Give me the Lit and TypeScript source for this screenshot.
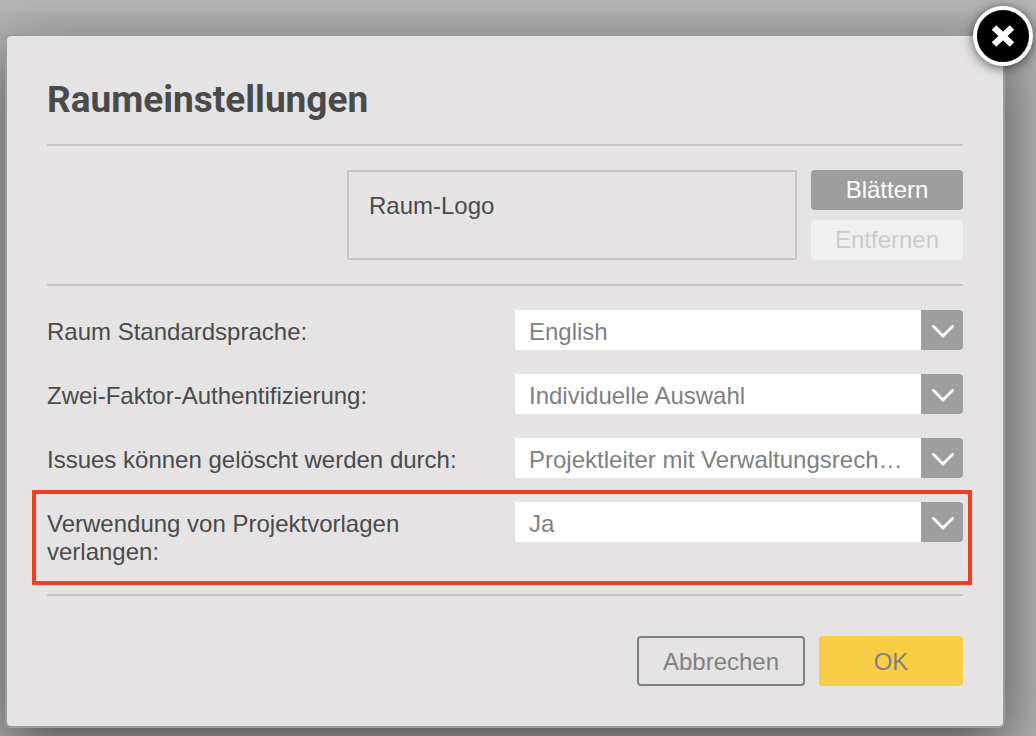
import { LitElement, html, css } from "lit";
import { customElement, property } from "lit/decorators.js";

@customElement("select-row")
class SelectRow extends LitElement {
  @property() name = "";
  @property() label = "";
  @property({ attribute: false }) options: string[] = [];

  static styles = css`
    :host {
      display: block;
    }
    .row {
      display: grid;
      grid-template-columns: minmax(0, 1fr) 448px;
      column-gap: 20px;
      align-items: start;
    }
    .label {
      padding-top: 8px;
    }
    .field {
      display: grid;
      grid-template-columns: minmax(0, 1fr) 42px;
      height: 40px;
    }
    .select {
      grid-area: 1 / 1 / 2 / 3;
      appearance: none;
      box-sizing: border-box;
      width: 100%;
      height: 40px;
      margin: 0;
      padding: 4px 56px 0 14px;
      border: 0;
      border-radius: 0 4px 4px 0;
      background: #fff;
      color: #808080;
      font: inherit;
      text-overflow: ellipsis;
      white-space: nowrap;
      overflow: hidden;
    }
    .arrow {
      grid-area: 1 / 2 / 2 / 3;
      z-index: 1;
      width: 42px;
      height: 40px;
      border-radius: 0 4px 4px 0;
      background: #9e9e9e;
      pointer-events: none;
    }
  `;

  render() {
    return html`
      <div class="row">
        <label class="label" for=${this.name}>${this.label}</label>
        <div class="field">
          <select class="select" id=${this.name} name=${this.name}>
            ${this.options.map((o) => html`<option>${o}</option>`)}
          </select>
          <svg class="arrow" viewBox="0 0 42 40" aria-hidden="true">
            <path d="M12.3 16.2 L22 26 L31.7 16.2" fill="none" stroke="#fff" stroke-width="2.8" stroke-linecap="round" />
          </svg>
        </div>
      </div>
    `;
  }
}

@customElement("app-root")
class AppRoot extends LitElement {
  static styles = css`
    :host {
      display: block;
      box-sizing: border-box;
      min-height: 100vh;
      padding: 34px 31px 8px 5px;
      overflow: hidden;
      background: linear-gradient(#b5b5b5 12px, #b1b1b1 12px);
      color: #4a4a4a;
      font: 24px/28px "Liberation Sans", Arial, sans-serif;
    }
    .dialog {
      position: relative;
      padding: 40px;
      border: 2px solid #9d9d9d;
      border-radius: 6px;
      background: #e5e3e4;
      background-clip: padding-box;
      box-shadow: 0 20px 60px rgba(0, 0, 0, 0.55);
    }
    .title {
      margin: 0;
      padding: 2px 0 22px;
      font: 700 37px/44px Roboto, sans-serif;
    }
    .logo {
      display: flex;
      justify-content: flex-end;
      gap: 14px;
      padding: 24px 0;
      border-top: 2px solid #c9c7c8;
      border-bottom: 2px solid #c9c7c8;
    }
    .preview {
      box-sizing: border-box;
      width: 450px;
      padding: 20px;
      border: 2px solid #c9c7c8;
    }
    .logo-actions {
      display: flex;
      flex-direction: column;
      gap: 10px;
      width: 152px;
    }
    .button {
      box-sizing: border-box;
      margin: 0;
      padding: 0;
      border: 0;
      border-radius: 4px;
      color: #808080;
      font: inherit;
    }
    .browse,
    .remove {
      height: 40px;
    }
    .browse {
      background: #9e9e9e;
      color: #fff;
    }
    .remove {
      background: #efefef;
      color: #cccac9;
    }
    .settings {
      display: flex;
      flex-direction: column;
      gap: 24px;
      padding: 24px 0 28px;
      border-bottom: 2px solid #c9c7c8;
    }
    .highlighted {
      position: relative;
    }
    .highlighted::after {
      content: "";
      position: absolute;
      inset: -12px -9px -19px -15px;
      border: 4px solid #ee4027;
      pointer-events: none;
    }
    .footer {
      display: flex;
      justify-content: flex-end;
      gap: 14px;
      padding-top: 40px;
    }
    .cancel,
    .ok {
      height: 50px;
      padding-top: 2px;
    }
    .cancel {
      width: 168px;
      border: 2px solid #808080;
      background: transparent;
    }
    .ok {
      width: 144px;
      background: #f7ce46;
    }
    .close {
      position: absolute;
      top: -30px;
      right: -30px;
      box-sizing: border-box;
      width: 60px;
      height: 60px;
      margin: 0;
      padding: 0;
      border: 4px solid #fff;
      border-radius: 50%;
      background: #000;
      box-shadow: 0 2px 12px rgba(0, 0, 0, 0.6);
    }
    .close-icon {
      display: block;
      width: 52px;
      height: 52px;
    }
  `;

  render() {
    return html`
      <form class="dialog" role="dialog" aria-labelledby="title">
        <h1 class="title" id="title">Raumeinstellungen</h1>
        <section class="logo">
          <div class="preview">Raum-Logo</div>
          <div class="logo-actions">
            <button class="button browse" type="button">Blättern</button>
            <button class="button remove" type="button" disabled>Entfernen</button>
          </div>
        </section>
        <section class="settings">
          <select-row name="language" label="Raum Standardsprache:" .options=${["English"]}></select-row>
          <select-row name="twofactor" label="Zwei-Faktor-Authentifizierung:" .options=${["Individuelle Auswahl"]}></select-row>
          <select-row name="deletion" label="Issues können gelöscht werden durch:" .options=${["Projektleiter mit Verwaltungsrech…"]}></select-row>
          <select-row class="highlighted" name="templates" label="Verwendung von Projektvorlagen verlangen:" .options=${["Ja"]}></select-row>
        </section>
        <footer class="footer">
          <button class="button cancel" type="button">Abbrechen</button>
          <button class="button ok" type="button">OK</button>
        </footer>
        <button class="close" type="button" aria-label="Schließen">
          <svg class="close-icon" viewBox="0 0 52 52" aria-hidden="true">
            <path d="M17 17.5 L35 34.5 M35 17.5 L17 34.5" fill="none" stroke="#fff" stroke-width="6.5" />
          </svg>
        </button>
      </form>
    `;
  }
}
